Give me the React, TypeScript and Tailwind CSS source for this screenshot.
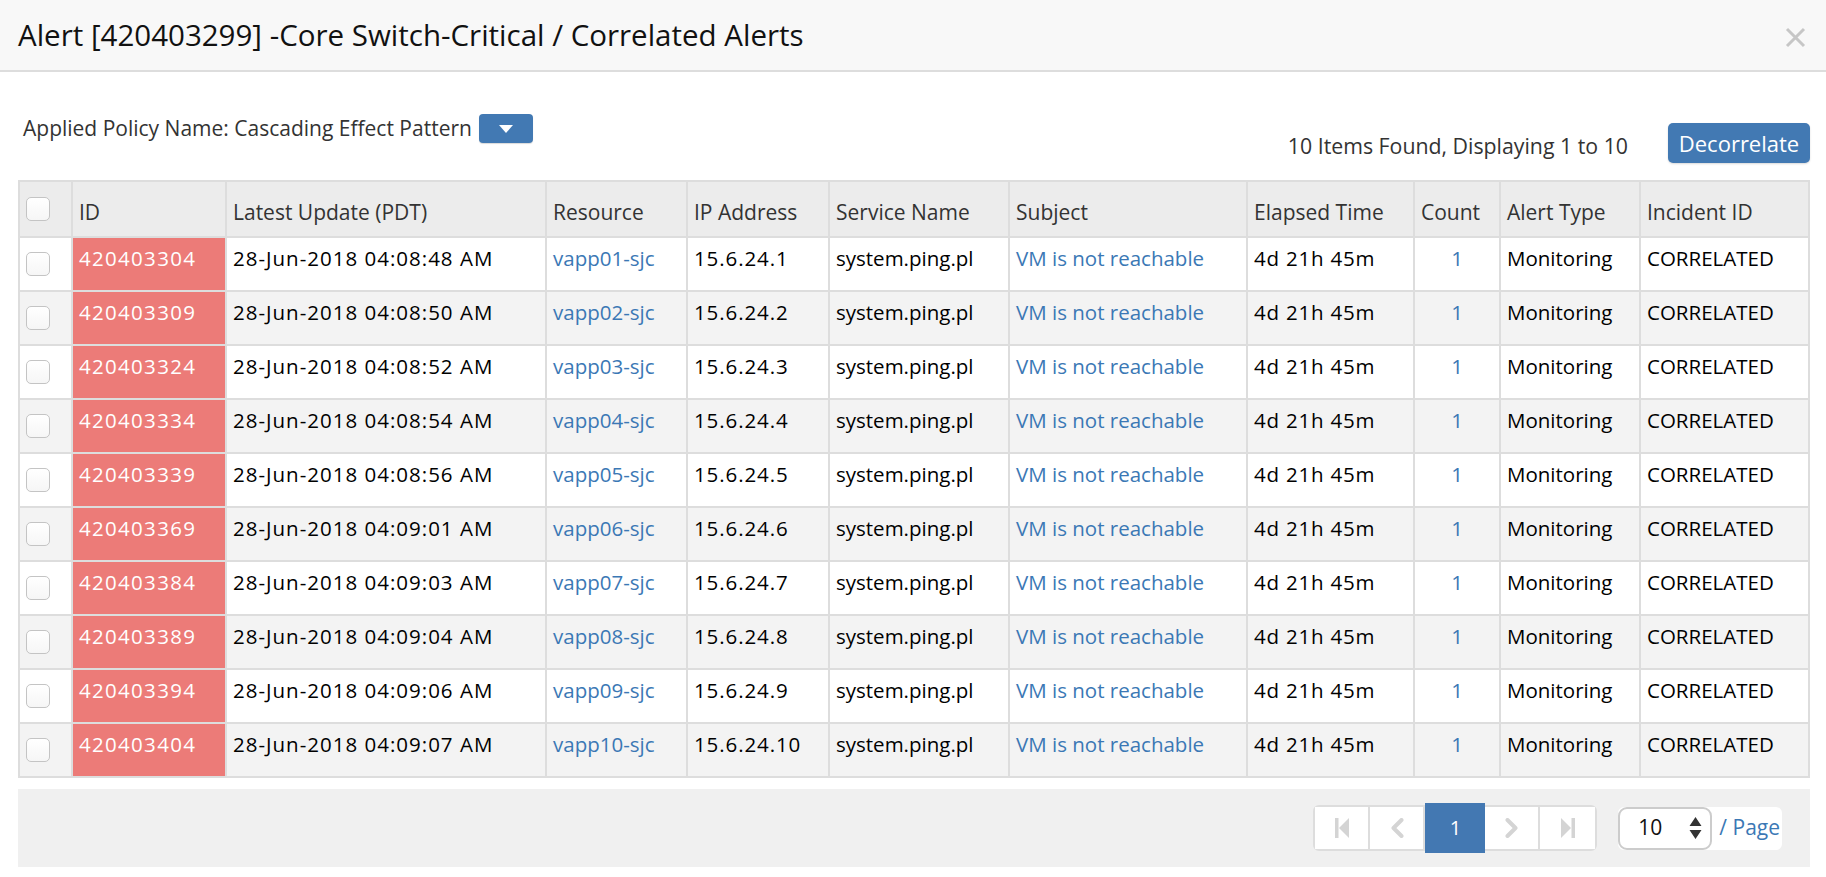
import React from "react";

type Alert = {
  id: string
  updated: string
  resource: string
  ip: string
}

const ALERTS: Alert[] = [
  { id: "420403304", updated: "28-Jun-2018 04:08:48 AM", resource: "vapp01-sjc", ip: "15.6.24.1" },
  { id: "420403309", updated: "28-Jun-2018 04:08:50 AM", resource: "vapp02-sjc", ip: "15.6.24.2" },
  { id: "420403324", updated: "28-Jun-2018 04:08:52 AM", resource: "vapp03-sjc", ip: "15.6.24.3" },
  { id: "420403334", updated: "28-Jun-2018 04:08:54 AM", resource: "vapp04-sjc", ip: "15.6.24.4" },
  { id: "420403339", updated: "28-Jun-2018 04:08:56 AM", resource: "vapp05-sjc", ip: "15.6.24.5" },
  { id: "420403369", updated: "28-Jun-2018 04:09:01 AM", resource: "vapp06-sjc", ip: "15.6.24.6" },
  { id: "420403384", updated: "28-Jun-2018 04:09:03 AM", resource: "vapp07-sjc", ip: "15.6.24.7" },
  { id: "420403389", updated: "28-Jun-2018 04:09:04 AM", resource: "vapp08-sjc", ip: "15.6.24.8" },
  { id: "420403394", updated: "28-Jun-2018 04:09:06 AM", resource: "vapp09-sjc", ip: "15.6.24.9" },
  { id: "420403404", updated: "28-Jun-2018 04:09:07 AM", resource: "vapp10-sjc", ip: "15.6.24.10" },
]

const COLUMNS = [
  { label: "", width: "w-[53px]" },
  { label: "ID", width: "w-[154px]" },
  { label: "Latest Update (PDT)", width: "w-[320px]" },
  { label: "Resource", width: "w-[141px]" },
  { label: "IP Address", width: "w-[142px]" },
  { label: "Service Name", width: "w-[180px]" },
  { label: "Subject", width: "w-[238px]" },
  { label: "Elapsed Time", width: "w-[167px]" },
  { label: "Count", width: "w-[86px]" },
  { label: "Alert Type", width: "w-[140px]" },
  { label: "Incident ID", width: "" },
]

// plain box checkbox, as drawn by the browser
function Box() {
  return (
    <span className="block w-[24px] h-[24px] rounded-[5px] border-[1.5px] border-[#c4c4c4] bg-gradient-to-b from-white to-[#f6f6f6]" />
  )
}

function PageButton({ children, last }: { children: React.ReactNode, last?: boolean }) {
  return (
    <div className={`w-[55px] h-full flex items-center justify-center bg-white ${last ? '' : 'border-r-2 border-[#dddddd]'}`}>
      {children}
    </div>
  )
}

export default function App() {
  const cell = "border-2 border-[#dddddd] align-top pt-[6px] px-[6px]"
  return (
    <div className="w-[1826px] h-[877px] bg-white font-['Open_Sans',sans-serif] text-black overflow-hidden">
      {/* modal header */}
      <div className="h-[72px] bg-[#f8f8f8] border-b-2 border-[#dddddd] flex items-center justify-between pl-[18px] pr-[20px]">
        <h1 className="text-[29.5px] text-[#111] leading-none">
          Alert [420403299] -Core Switch-Critical / Correlated Alerts
        </h1>
        <svg width="21" height="21" viewBox="0 0 21 21" className="mt-[4px]">
          <path d="M2 2 L19 19 M19 2 L2 19" stroke="#c6c6c6" strokeWidth="3" />
        </svg>
      </div>

      <div className="pl-[18px] pr-[16px]">
        {/* toolbar */}
        <div className="h-[108px] flex justify-between items-start">
          <div className="pt-[41px] pl-[5px] flex items-center gap-[7px]">
            <span className="text-[21px] text-[#333]">Applied Policy Name: Cascading Effect Pattern</span>
            <button className="w-[54px] h-[29px] rounded-[4px] bg-[#4279b3] flex items-center justify-center shadow-[0_1px_1px_rgba(0,0,0,0.15)]">
              <svg width="14" height="8" viewBox="0 0 14 8">
                <path d="M0 0 L14 0 L7 8 Z" fill="white" />
              </svg>
            </button>
          </div>
          <div className="pt-[51px] flex items-center gap-[40px]">
            <span className="text-[21.3px] text-[#333] mt-[5px]">10 Items Found, Displaying 1 to 10</span>
            <button className="w-[142px] h-[40px] rounded-[5px] bg-[#4279b3] text-white text-[22px] shadow-[0_1px_2px_rgba(0,0,0,0.15)]">
              Decorrelate
            </button>
          </div>
        </div>

        {/* alerts table */}
        <table className="w-[1792px] table-fixed border-collapse border-2 border-[#dddddd] text-[20.5px] leading-[28px]">
          <colgroup>
            {COLUMNS.map((c, i) => <col key={i} className={c.width} />)}
          </colgroup>
          <thead>
            <tr className="h-[56px] bg-[#ececec] text-[#333] text-[21px]">
              {COLUMNS.map((c, i) => (
                <th key={i} className={`border-2 border-[#dddddd] font-normal text-left align-bottom pb-[10px] px-[6px]`}>
                  {i === 0 ? <div className="pb-[5px]"><Box /></div> : c.label}
                </th>
              ))}
            </tr>
          </thead>
          <tbody>
            {ALERTS.map((a, i) => (
              <tr key={a.id} className={`h-[54px] ${i % 2 === 1 ? 'bg-[#f3f3f3]' : 'bg-white'}`}>
                <td className="border-2 border-[#dddddd] align-middle px-[6px]">
                  <Box />
                </td>
                <td className={`${cell} bg-[#ec7b78] text-white tracking-[1.3px]`}>{a.id}</td>
                <td className={`${cell} tracking-[1px]`}>{a.updated}</td>
                <td className={`${cell} text-[#3b78b5]`}>{a.resource}</td>
                <td className={`${cell} tracking-[0.9px]`}>{a.ip}</td>
                <td className={cell}>system.ping.pl</td>
                <td className={`${cell} text-[#3b78b5]`}>VM is not reachable</td>
                <td className={`${cell} tracking-[0.8px]`}>4d 21h 45m</td>
                <td className={`${cell} text-center text-[#3b78b5]`}>1</td>
                <td className={cell}>Monitoring</td>
                <td className={cell}>CORRELATED</td>
              </tr>
            ))}
          </tbody>
        </table>

        {/* pager */}
        <div className="mt-[11px] h-[78px] w-[1792px] bg-[#f0f0f0] flex items-center justify-end pr-[28px]">
          <div className="h-[46px] flex items-center border-2 border-[#dddddd] rounded-[6px] bg-white">
            <PageButton>
              <svg width="14" height="20" viewBox="0 0 14 20">
                <rect x="0" y="0" width="3.5" height="20" fill="#d4d4d4" />
                <path d="M14 0 L14 20 L4 10 Z" fill="#d4d4d4" />
              </svg>
            </PageButton>
            <PageButton>
              <svg width="14" height="20" viewBox="0 0 14 20">
                <path d="M11.5 2 L3.5 10 L11.5 18" stroke="#d4d4d4" strokeWidth="4" fill="none" strokeLinecap="round" strokeLinejoin="round" />
              </svg>
            </PageButton>
            <div className="w-[60px] h-[50px] -my-[2px] bg-[#4378b2] text-white text-[20px] flex items-center justify-center">1</div>
            <PageButton>
              <svg width="14" height="20" viewBox="0 0 14 20">
                <path d="M2.5 2 L10.5 10 L2.5 18" stroke="#d4d4d4" strokeWidth="4" fill="none" strokeLinecap="round" strokeLinejoin="round" />
              </svg>
            </PageButton>
            <PageButton last>
              <svg width="14" height="20" viewBox="0 0 14 20">
                <path d="M0 0 L0 20 L10 10 Z" fill="#d4d4d4" />
                <rect x="10.5" y="0" width="3.5" height="20" fill="#d4d4d4" />
              </svg>
            </PageButton>
          </div>
          <div className="ml-[21px] h-[43px] flex items-center bg-white rounded-[6px]">
            <div className="w-[94px] h-[43px] rounded-[9px] border-2 border-[#cccccc] flex items-center justify-between pl-[18px] pr-[8px]">
              <span className="text-[21px] text-[#111]">10</span>
              <svg width="13" height="24" viewBox="0 0 13 24">
                <path d="M6.5 1 L12.5 10 L0.5 10 Z M6.5 23 L12.5 14 L0.5 14 Z" fill="#333" />
              </svg>
            </div>
            <span className="ml-[7px] mr-[2px] text-[21px] text-[#3b78b5]">/ Page</span>
          </div>
        </div>
      </div>
    </div>
  );
}
